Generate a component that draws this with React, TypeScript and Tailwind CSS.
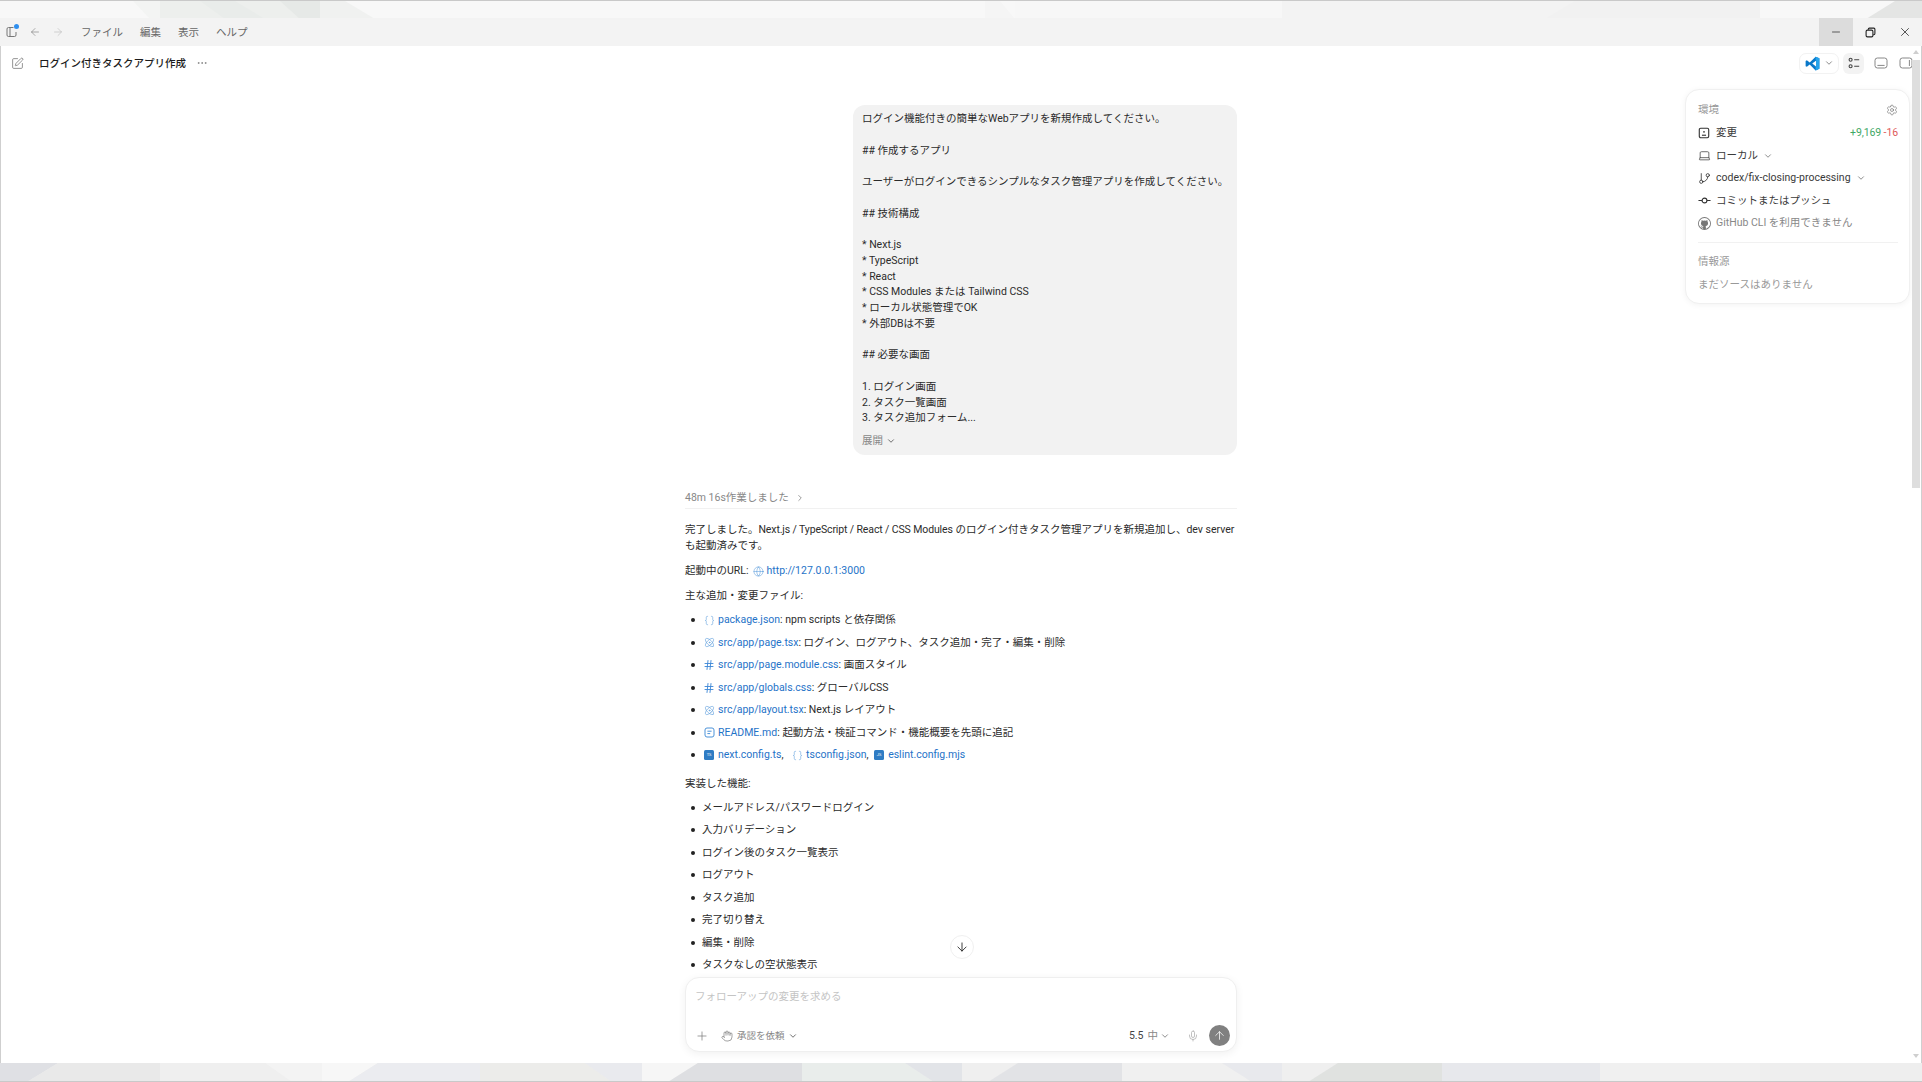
import {
  ArrowDown,
  ArrowLeft,
  ArrowRight,
  ArrowUp,
  Atom,
  Braces,
  ChevronDown,
  ChevronRight,
  Ellipsis,
  GitBranch,
  Globe,
  Hand,
  Hash,
  Laptop,
  Mic,
  Minus,
  Plus,
  Settings,
  SquarePen,
  X,
} from 'lucide-react'
import { VscGithub } from 'react-icons/vsc'
import type { ReactNode } from 'react'

const topPolys = [
  { p: '133,0 160,0 160,18 150,18', c: '#f3f4f3' },
  { p: '160,0 320,0 320,18 160,18', c: '#edefed' },
  { p: '200,0 235,0 265,18 225,18', c: '#e9ecea' },
  { p: '280,0 320,0 320,18 300,18', c: '#e6e9e7' },
  { p: '320,0 345,0 375,18 320,18', c: '#f0f1f0' },
  { p: '985,0 1000,0 1015,18 985,18', c: '#f5f5f5' },
  { p: '1015,0 1282,0 1282,18 1015,18', c: '#f7f7f7' },
  { p: '1282,0 1575,0 1575,18 1282,18', c: '#f3f3f3' },
  { p: '1575,0 1760,0 1760,18 1545,18', c: '#f1f1f1' },
  { p: '1895,0 1922,0 1922,18 1866,18', c: '#e4e5e4' },
]

const bottomPolys = [
  { p: '0,0 58,0 27,19 0,19', c: '#dfe0e4' },
  { p: '58,0 160,0 160,19 27,19', c: '#e9e9e9' },
  { p: '160,0 265,0 292,19 160,19', c: '#efefef' },
  { p: '265,0 322,0 322,19 292,19', c: '#f3f3f3' },
  { p: '322,0 378,0 348,19 322,19', c: '#f7f7f7' },
  { p: '378,0 480,0 480,19 348,19', c: '#ebecf0' },
  { p: '480,0 585,0 612,19 480,19', c: '#ececea' },
  { p: '585,0 642,0 642,19 612,19', c: '#e9eaee' },
  { p: '642,0 698,0 668,19 642,19', c: '#f6f6f6' },
  { p: '698,0 802,0 802,19 668,19', c: '#dedfe2' },
  { p: '802,0 905,0 934,19 802,19', c: '#e9edeb' },
  { p: '905,0 962,0 962,19 934,19', c: '#e2e4e8' },
  { p: '962,0 1018,0 988,19 962,19', c: '#efefef' },
  { p: '1018,0 1122,0 1122,19 988,19', c: '#e2e3e6' },
  { p: '1122,0 1222,0 1252,19 1122,19', c: '#f0f0f0' },
  { p: '1222,0 1282,0 1282,19 1252,19', c: '#e8e9ed' },
  { p: '1282,0 1338,0 1308,19 1282,19', c: '#efefef' },
  { p: '1338,0 1442,0 1442,19 1308,19', c: '#e0e2e0' },
  { p: '1442,0 1600,0 1600,19 1442,19', c: '#e7e8ec' },
  { p: '1600,0 1760,0 1760,19 1600,19', c: '#f0f0f0' },
  { p: '1760,0 1922,0 1922,19 1760,19', c: '#eeeeee' },
]

function Wallpaper({ polys, height, bg }: { polys: { p: string; c: string }[]; height: number; bg: string }) {
  return (
    <svg width="1922" height={height} viewBox={`0 0 1922 ${height}`} className="block shrink-0" style={{ background: bg }}>
      {polys.map((item) => (
        <polygon key={item.p} points={item.p} fill={item.c} />
      ))}
    </svg>
  )
}

function VsCodeLogo() {
  return (
    <svg width="15" height="15" viewBox="0 0 24 24">
      <path fill="#0a78c9" d="M17 1 7.5 10.3 3 6.8 1 7.8v8.4l2 1 4.5-3.5L17 23l6-2.6V3.6L17 1Zm1 6v10l-6.4-5L18 7Z" />
      <path fill="#25a4ec" d="M17 1v5l1 1v10l-1 1v5l6-2.6V3.6L17 1Z" />
    </svg>
  )
}

function DiffIcon() {
  return (
    <svg width="12" height="12" viewBox="0 0 14 14" fill="none" stroke="#333" strokeWidth="1.3">
      <rect x="1.5" y="1.5" width="11" height="11" rx="1.6" />
      <circle cx="7" cy="5.6" r="1" fill="#333" stroke="none" />
      <path d="M4.6 9.6h4.8" />
    </svg>
  )
}

function CommitIcon() {
  return (
    <svg width="13" height="13" viewBox="0 0 14 14" fill="none" stroke="#333" strokeWidth="1.2">
      <circle cx="7" cy="7" r="2.6" />
      <path d="M0.5 7h3.9M9.6 7h3.9" />
    </svg>
  )
}

function SidebarToggle() {
  return (
    <span className="relative flex w-[14px] h-[14px] items-center justify-center">
      <svg width="11" height="12" viewBox="0 0 11 12" fill="none" stroke="#777" strokeWidth="1">
        <path d="M7.5 1.5h-5a1.5 1.5 0 0 0-1.5 1.5v6a1.5 1.5 0 0 0 1.5 1.5h6A1.5 1.5 0 0 0 10 9V6" />
        <path d="M4 1.5v9" />
      </svg>
      <span className="absolute -top-[1px] -right-[1px] w-[5px] h-[5px] rounded-full bg-[#2f8fef]" />
    </span>
  )
}

function TasksIcon() {
  return (
    <svg width="12" height="12" viewBox="0 0 12 12" fill="none" stroke="#444" strokeWidth="1.1">
      <circle cx="2.6" cy="2.8" r="1.5" />
      <circle cx="2.6" cy="9.2" r="1.5" />
      <path d="M6.2 2.8h5M6.2 9.2h5" />
    </svg>
  )
}

function PanelBox({ side }: { side: 'bottom' | 'right' }) {
  return (
    <svg width="14" height="12" viewBox="0 0 14 12" fill="none" stroke="#888" strokeWidth="1">
      <rect x="1" y="1" width="12" height="10" rx="2.4" />
      {side === 'bottom' ? <path d="M3.4 8.4h7.2" /> : <path d="M10.4 3v6" />}
    </svg>
  )
}

function RestoreIcon() {
  return (
    <svg width="11" height="11" viewBox="0 0 10 10" fill="none" stroke="#222" strokeWidth="1">
      <rect x="1" y="2.8" width="6.2" height="6.2" rx="1.2" />
      <path d="M3 2.6V2a1 1 0 0 1 1-1h4a1 1 0 0 1 1 1v4a1 1 0 0 1-1 1h-.6" />
    </svg>
  )
}

function DocIcon() {
  return (
    <svg width="11" height="11" viewBox="0 0 11 11" fill="none" stroke="#4c93d9" strokeWidth="1">
      <rect x="1" y="1" width="9" height="9" rx="2" />
      <path d="M3.4 4.2h4.2M3.4 6.6h2.8" />
    </svg>
  )
}

function TsIcon({ label }: { label: string }) {
  return (
    <span className="flex items-center justify-center w-[10px] h-[10px] rounded-[1.5px] bg-[#2f7cc4] text-white text-[4px] leading-none">
      {label}
    </span>
  )
}

function FileLink({ icon, name }: { icon: ReactNode; name: string }) {
  return (
    <>
      <span className="inline-flex w-[14px] h-[12px] mr-[2px] items-center justify-center align-middle -mt-[1px] text-[#4c93d9]">{icon}</span>
      <span className="text-[#1f73c8]">{name}</span>
    </>
  )
}

const braces = <Braces size={11} strokeWidth={1.1} />
const reactIcon = <Atom size={11} strokeWidth={1.2} />
const hash = <Hash size={12} strokeWidth={1.8} className="text-[#3b86d6]" />

const fileRows = [
  { icon: braces, name: 'package.json', text: 'npm scripts と依存関係' },
  { icon: reactIcon, name: 'src/app/page.tsx', text: 'ログイン、ログアウト、タスク追加・完了・編集・削除' },
  { icon: hash, name: 'src/app/page.module.css', text: '画面スタイル' },
  { icon: hash, name: 'src/app/globals.css', text: 'グローバルCSS' },
  { icon: reactIcon, name: 'src/app/layout.tsx', text: 'Next.js レイアウト' },
  { icon: <DocIcon />, name: 'README.md', text: '起動方法・検証コマンド・機能概要を先頭に追記' },
]

const features = [
  'メールアドレス/パスワードログイン',
  '入力バリデーション',
  'ログイン後のタスク一覧表示',
  'ログアウト',
  'タスク追加',
  '完了切り替え',
  '編集・削除',
  'タスクなしの空状態表示',
]

const promptLines = [
  'ログイン機能付きの簡単なWebアプリを新規作成してください。',
  '',
  '## 作成するアプリ',
  '',
  'ユーザーがログインできるシンプルなタスク管理アプリを作成してください。',
  '',
  '## 技術構成',
  '',
  '* Next.js',
  '* TypeScript',
  '* React',
  '* CSS Modules または Tailwind CSS',
  '* ローカル状態管理でOK',
  '* 外部DBは不要',
  '',
  '## 必要な画面',
  '',
  '1. ログイン画面',
  '2. タスク一覧画面',
  '3. タスク追加フォーム...',
]

function Bullet({ children }: { children: ReactNode }) {
  return (
    <li className="flex items-center h-[22.5px]">
      <span className="w-[4px] h-[4px] rounded-full bg-[#222] ml-[6px] mr-[7px] shrink-0" />
      <span>{children}</span>
    </li>
  )
}

function SidePanel() {
  return (
    <aside className="absolute top-[43px] left-[1684px] w-[225px] h-[215px] rounded-[14px] bg-white border border-[#f0f0f0] shadow-[0_1px_6px_rgba(0,0,0,0.05)] pl-[12px] pr-[11px] text-[10.5px] text-[#3a3a3a]">
      <div className="flex items-center justify-between h-[17px] mt-[11px] text-[#999]">
        <span>環境</span>
        <Settings size={12} strokeWidth={1.2} className="text-[#666]" />
      </div>
      <div className="flex items-center justify-between h-[22.5px] mt-[4px]">
        <span className="flex items-center gap-[6px]">
          <DiffIcon />
          <span>変更</span>
        </span>
        <span className="tracking-[-0.1px]">
          <span className="text-[#3fa866]">+9,169</span> <span className="text-[#e05a5a]">-16</span>
        </span>
      </div>
      <div className="flex items-center gap-[5px] h-[22.5px]">
        <Laptop size={13} strokeWidth={1.3} className="text-[#333]" />
        <span>ローカル</span>
        <ChevronDown size={10} className="text-[#777]" />
      </div>
      <div className="flex items-center gap-[5px] h-[22.5px]">
        <GitBranch size={13} strokeWidth={1.5} className="text-[#333]" />
        <span>codex/fix-closing-processing</span>
        <ChevronDown size={10} className="text-[#777]" />
      </div>
      <div className="flex items-center gap-[5px] h-[22.5px]">
        <CommitIcon />
        <span>コミットまたはプッシュ</span>
      </div>
      <div className="flex items-center gap-[5px] h-[22.5px] text-[#888]">
        <VscGithub size={13} className="text-[#777]" />
        <span>GitHub CLI を利用できません</span>
      </div>
      <div className="border-t border-[#f1f1f1] mt-[7px] mb-[11px]" />
      <div className="h-[17px] text-[#999]">情報源</div>
      <div className="h-[17px] mt-[6px] text-[#999]">まだソースはありません</div>
    </aside>
  )
}

export default function App() {
  return (
    <div className="w-[1922px] h-[1082px] overflow-hidden flex flex-col bg-white text-[#2b2b2b] text-[10.5px] leading-[15.75px] [font-family:'Roboto','Noto_Sans_CJK_JP',sans-serif]">
      <div className="h-[1px] bg-[#c9c9c9] shrink-0" />
      <Wallpaper polys={topPolys} height={17} bg="#f8f8f8" />

      {/* title bar */}
      <div className="flex items-center h-[28px] shrink-0 bg-[#f3f3f3] pl-[4px] text-[#666]">
        <SidebarToggle />
        <ArrowLeft size={12} strokeWidth={1.2} className="ml-[11px] text-[#777]" />
        <ArrowRight size={12} strokeWidth={1.2} className="ml-[11px] text-[#bbb]" />
        <div className="flex items-center gap-[17px] ml-[17px] pt-[1px]">
          <span>ファイル</span>
          <span>編集</span>
          <span>表示</span>
          <span>ヘルプ</span>
        </div>
        <div className="ml-auto flex h-full items-stretch">
          <div className="w-[34px] bg-[#dcdcdc] flex items-center justify-center">
            <Minus size={12} strokeWidth={1.4} className="text-[#222]" />
          </div>
          <div className="w-[34px] flex items-center justify-center">
            <RestoreIcon />
          </div>
          <div className="w-[35px] flex items-center justify-center">
            <X size={14} strokeWidth={1.3} className="text-[#222]" />
          </div>
        </div>
      </div>

      {/* content */}
      <div className="relative flex-1 min-h-0 flex flex-col border-x border-[#cfcfcf]">
        <header className="flex items-center h-[34px] shrink-0 pl-[10px] pr-[7px]">
          <SquarePen size={13} strokeWidth={1.3} className="text-[#666]" />
          <span className="ml-[15px] mt-[1px] font-medium text-[#1c1c1c]">ログイン付きタスクアプリ作成</span>
          <Ellipsis size={12} strokeWidth={1.2} className="ml-[10px] text-[#666]" />
          <div className="ml-auto flex items-center">
            <div className="flex items-center justify-center gap-[4px] w-[40px] h-[21px] rounded-[7px] border border-[#f2f2f2]">
              <VsCodeLogo />
              <ChevronDown size={10} className="text-[#777]" />
            </div>
            <div className="ml-[4px] flex items-center justify-center w-[21px] h-[21px] rounded-[6px] bg-[#f3f3f3]">
              <TasksIcon />
            </div>
            <div className="ml-[8px] flex items-center justify-center w-[17px] h-[21px]">
              <PanelBox side="bottom" />
            </div>
            <div className="ml-[8px] flex items-center justify-center w-[17px] h-[21px]">
              <PanelBox side="right" />
            </div>
          </div>
        </header>

        <main className="flex-1 min-h-0 overflow-hidden flex flex-col items-center">
          <div className="w-[552px] pt-[25px]">
            <div className="ml-auto w-[384px] rounded-[12px] bg-[#f2f2f2] px-[9px] pt-[6px] pb-[6px]">
              {promptLines.map((line, i) => (
                <div key={i} className="h-[15.75px] whitespace-pre">
                  {line}
                </div>
              ))}
              <div className="flex items-center gap-[3px] h-[16px] mt-[7px] text-[#888]">
                展開 <ChevronDown size={10} className="text-[#555]" />
              </div>
            </div>

            <div className="flex items-center gap-[6px] h-[24px] mt-[30px] border-b border-[#f1f1f1] pt-[2px] text-[#888]">
              48m 16s作業しました
              <ChevronRight size={10} />
            </div>

            <p className="mt-[13px] leading-[16px]">
              完了しました。<span className="tracking-[-0.12px]">Next.js / TypeScript / React / CSS Modules</span> のログイン付きタスク管理アプリを新規追加し、dev server
              <br />
              も起動済みです。
            </p>
            <p className="mt-[9px] flex items-center h-[16px]">
              起動中のURL:
              <Globe size={11} strokeWidth={1.1} className="ml-[5px] mr-[2px] text-[#4c93d9]" />
              <span className="text-[#1f73c8]">http://127.0.0.1:3000</span>
            </p>
            <p className="mt-[9px] h-[16px]">主な追加・変更ファイル:</p>

            <ul className="mt-[5px]">
              {fileRows.map((row) => (
                <Bullet key={row.name}>
                  <FileLink icon={row.icon} name={row.name} />: {row.text}
                </Bullet>
              ))}
              <Bullet>
                <FileLink icon={<TsIcon label="TS" />} name="next.config.ts" />
                <span className="mr-[4px]">,</span>{' '}
                <FileLink icon={braces} name="tsconfig.json" />
                <span className="mr-[1px]">,</span>{' '}
                <FileLink icon={<TsIcon label="JS" />} name="eslint.config.mjs" />
              </Bullet>
            </ul>

            <p className="mt-[9px] h-[16px]">実装した機能:</p>
            <ul className="mt-[5px]">
              {features.map((feature) => (
                <Bullet key={feature}>{feature}</Bullet>
              ))}
            </ul>
          </div>
        </main>

        {/* jump to latest */}
        <div className="absolute left-[949px] top-[889px] w-[24px] h-[24px] rounded-full bg-white border border-[#f0f0f0] flex items-center justify-center">
          <ArrowDown size={14} strokeWidth={1.5} className="text-[#222]" />
        </div>

        {/* composer */}
        <div className="shrink-0 flex justify-center pb-[11px]">
          <div className="w-[552px] h-[75px] rounded-[14px] bg-white border border-[#efefef] shadow-[0_2px_8px_rgba(0,0,0,0.06)] flex flex-col pl-[9px] pr-[6px]">
            <div className="pt-[11px] text-[#c4c4c4]">フォローアップの変更を求める</div>
            <div className="mt-auto mb-[5px] flex items-center h-[21px]">
              <Plus size={14} strokeWidth={1.2} className="text-[#777]" />
              <Hand size={12} strokeWidth={1.2} className="ml-[12px] text-[#666]" />
              <span className="ml-[4px] text-[#888] text-[9.5px]">承認を依頼</span>
              <ChevronDown size={10} className="ml-[3px] text-[#555]" />
              <span className="ml-auto text-[#444]">5.5</span>
              <span className="ml-[4px] text-[#888]">中</span>
              <ChevronDown size={10} className="ml-[2px] text-[#777]" />
              <Mic size={12} strokeWidth={1.2} className="ml-[17px] text-[#999]" />
              <div className="ml-[10px] w-[21px] h-[21px] rounded-full bg-[#808080] flex items-center justify-center">
                <ArrowUp size={13} strokeWidth={1.4} className="text-white" />
              </div>
            </div>
          </div>
        </div>

        <SidePanel />

        {/* scrollbar */}
        <div className="absolute right-[1px] top-0 bottom-0 w-[8px]">
          <div className="absolute top-[4px] left-[1px] w-0 h-0 border-x-[3px] border-x-transparent border-b-[4px] border-b-[#cfcfcf]" />
          <div className="absolute top-[14px] left-0 w-[8px] h-[428px] bg-[#dedede]" />
          <div className="absolute bottom-[5px] left-[1px] w-0 h-0 border-x-[3px] border-x-transparent border-t-[4px] border-t-[#cfcfcf]" />
        </div>
      </div>

      <Wallpaper polys={bottomPolys} height={18} bg="#eeeeee" />
      <div className="h-[1px] bg-[#c9c9c9] shrink-0" />
    </div>
  )
}
